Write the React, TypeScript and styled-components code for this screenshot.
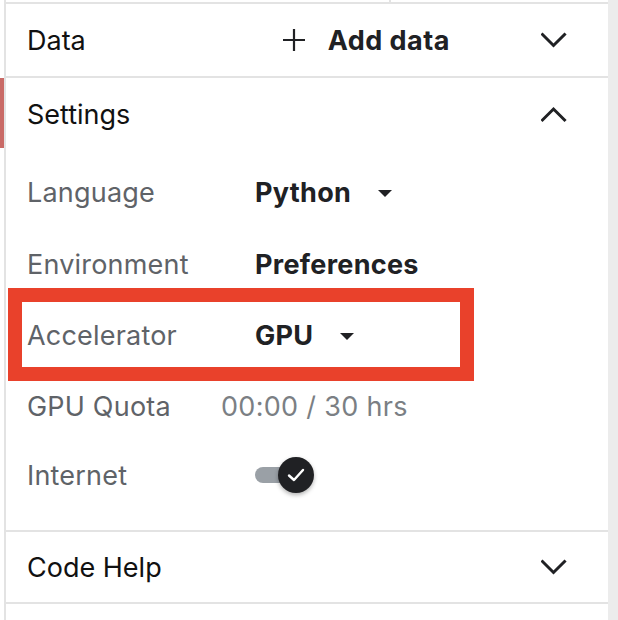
import React from "react";
import styled, { createGlobalStyle } from "styled-components";

const Global = createGlobalStyle`
  html, body { margin: 0; padding: 0; background: #ffffff; }
  body { font-family: Inter, "Noto Sans", sans-serif; -webkit-font-smoothing: antialiased; }
`;

const Page = styled.div`
  display: flex;
  width: 618px;
  height: 620px;
  overflow: hidden;
  background: #ffffff;
`;

const Gutter = styled.div`
  width: 4px;
  flex: none;
  padding-top: 78px;
  box-sizing: border-box;
`;

const ActiveMark = styled.div`
  width: 4px;
  height: 70px;
  background: #c96a66;
`;

const Panel = styled.div`
  width: 602px;
  flex: none;
  border-left: 2px solid #e3e3e3;
  display: flex;
  flex-direction: column;
`;

const RightRail = styled.div`
  flex: 1;
  background: #ececec;
`;

const TopEdge = styled.div`
  height: 2px;
  display: flex;
  border-bottom: 2px solid #e3e3e3;
`;

const TopCell = styled.div`
  width: 383px;
  border-right: 2px solid #e3e3e3;
`;

const Section = styled.section`
  border-bottom: 2px solid #e3e3e3;
`;

const Header = styled.div<{ $h: number }>`
  height: ${(p) => p.$h}px;
  display: flex;
  align-items: center;
  padding: 0 41px 0 21px;
  box-sizing: border-box;
`;

const Title = styled.div`
  font-size: 27px;
  color: #111111;
`;

const AddButton = styled.div`
  display: flex;
  align-items: center;
  gap: 22px;
  margin-left: auto;
  margin-right: 91px;
  font-size: 27px;
  font-weight: 700;
  color: #202124;
  letter-spacing: 0.5px;
`;

const Chevron = styled.svg<{ $auto?: boolean }>`
  width: 26px;
  height: 26px;
  flex: none;
  margin-left: ${(p) => (p.$auto ? "auto" : "0")};
`;

const Body = styled.div`
  padding: 6px 0 22px 0;
`;

const Row = styled.div<{ $h: number }>`
  position: relative;
  height: ${(p) => p.$h}px;
  display: flex;
  align-items: center;
  padding-left: 21px;
`;

const Label = styled.div<{ $w: number }>`
  width: ${(p) => p.$w}px;
  flex: none;
  font-size: 27px;
  color: #5f6368;
  letter-spacing: 0.2px;
`;

const Value = styled.div`
  display: flex;
  align-items: center;
  gap: 27px;
  font-size: 27px;
  font-weight: 700;
  color: #202124;
  letter-spacing: 0.3px;
`;

const Muted = styled.div`
  font-size: 27px;
  color: #7b7f84;
  letter-spacing: 0.3px;
`;

const Caret = styled.span`
  width: 0;
  height: 0;
  border-left: 7px solid transparent;
  border-right: 7px solid transparent;
  border-top: 7px solid #202124;
  margin-top: 2px;
`;

const Highlight = styled.div`
  position: absolute;
  left: 2px;
  top: -12px;
  width: 466px;
  height: 93px;
  border: 14px solid #e9412b;
  box-sizing: border-box;
  pointer-events: none;
`;

const Toggle = styled.div`
  position: relative;
  width: 60px;
  height: 36px;
`;

const Track = styled.div`
  position: absolute;
  left: 0;
  top: 10px;
  width: 46px;
  height: 16px;
  border-radius: 8px;
  background: #9aa0a6;
`;

const Knob = styled.div`
  position: absolute;
  left: 23px;
  top: 0;
  width: 36px;
  height: 36px;
  border-radius: 50%;
  background: #202124;
  box-shadow: 0 2px 4px rgba(0, 0, 0, 0.3);
  display: flex;
  align-items: center;
  justify-content: center;
`;

const Down = () => (
  <Chevron $auto viewBox="0 0 26 26" fill="none">
    <path d="M1.5 7.5 L12.5 18.5 L23.5 7.5" stroke="#202124" strokeWidth="3" strokeLinecap="square" />
  </Chevron>
);

const Up = () => (
  <Chevron $auto viewBox="0 0 26 26" fill="none">
    <path d="M1.5 19 L12.5 8 L23.5 19" stroke="#202124" strokeWidth="3" strokeLinecap="square" />
  </Chevron>
);

export default function App() {
  return (
    <Page>
      <Global />
      <Gutter>
        <ActiveMark />
      </Gutter>
      <Panel>
        <TopEdge>
          <TopCell />
        </TopEdge>
        <Section>
          <Header $h={72}>
            <Title>Data</Title>
            <AddButton>
              <svg width="24" height="24" viewBox="0 0 24 24" fill="none">
                <path d="M12 1 V23 M1 12 H23" stroke="#202124" strokeWidth="2.2" />
              </svg>
              Add data
            </AddButton>
            <Chevron viewBox="0 0 26 26" fill="none">
              <path d="M1.5 7.5 L12.5 18.5 L23.5 7.5" stroke="#202124" strokeWidth="3" strokeLinecap="square" />
            </Chevron>
          </Header>
        </Section>
        <Section>
          <Header $h={72}>
            <Title>Settings</Title>
            <Up />
          </Header>
          <Body>
            <Row $h={72}>
              <Label $w={228}>Language</Label>
              <Value>
                Python
                <Caret />
              </Value>
            </Row>
            <Row $h={72}>
              <Label $w={228}>Environment</Label>
              <Value>Preferences</Value>
            </Row>
            <Row $h={71}>
              <Highlight />
              <Label $w={228}>Accelerator</Label>
              <Value>
                GPU
                <Caret />
              </Value>
            </Row>
            <Row $h={71}>
              <Label $w={194}>GPU Quota</Label>
              <Muted>00:00 / 30 hrs</Muted>
            </Row>
            <Row $h={66}>
              <Label $w={228}>Internet</Label>
              <Toggle>
                <Track />
                <Knob>
                  <svg width="20" height="20" viewBox="0 0 20 20" fill="none">
                    <path d="M3 10.5 L8 15 L17 5" stroke="#ffffff" strokeWidth="2.4" strokeLinecap="round" strokeLinejoin="round" />
                  </svg>
                </Knob>
              </Toggle>
            </Row>
          </Body>
        </Section>
        <Section>
          <Header $h={70}>
            <Title>Code Help</Title>
            <Down />
          </Header>
        </Section>
      </Panel>
      <RightRail />
    </Page>
  );
}
